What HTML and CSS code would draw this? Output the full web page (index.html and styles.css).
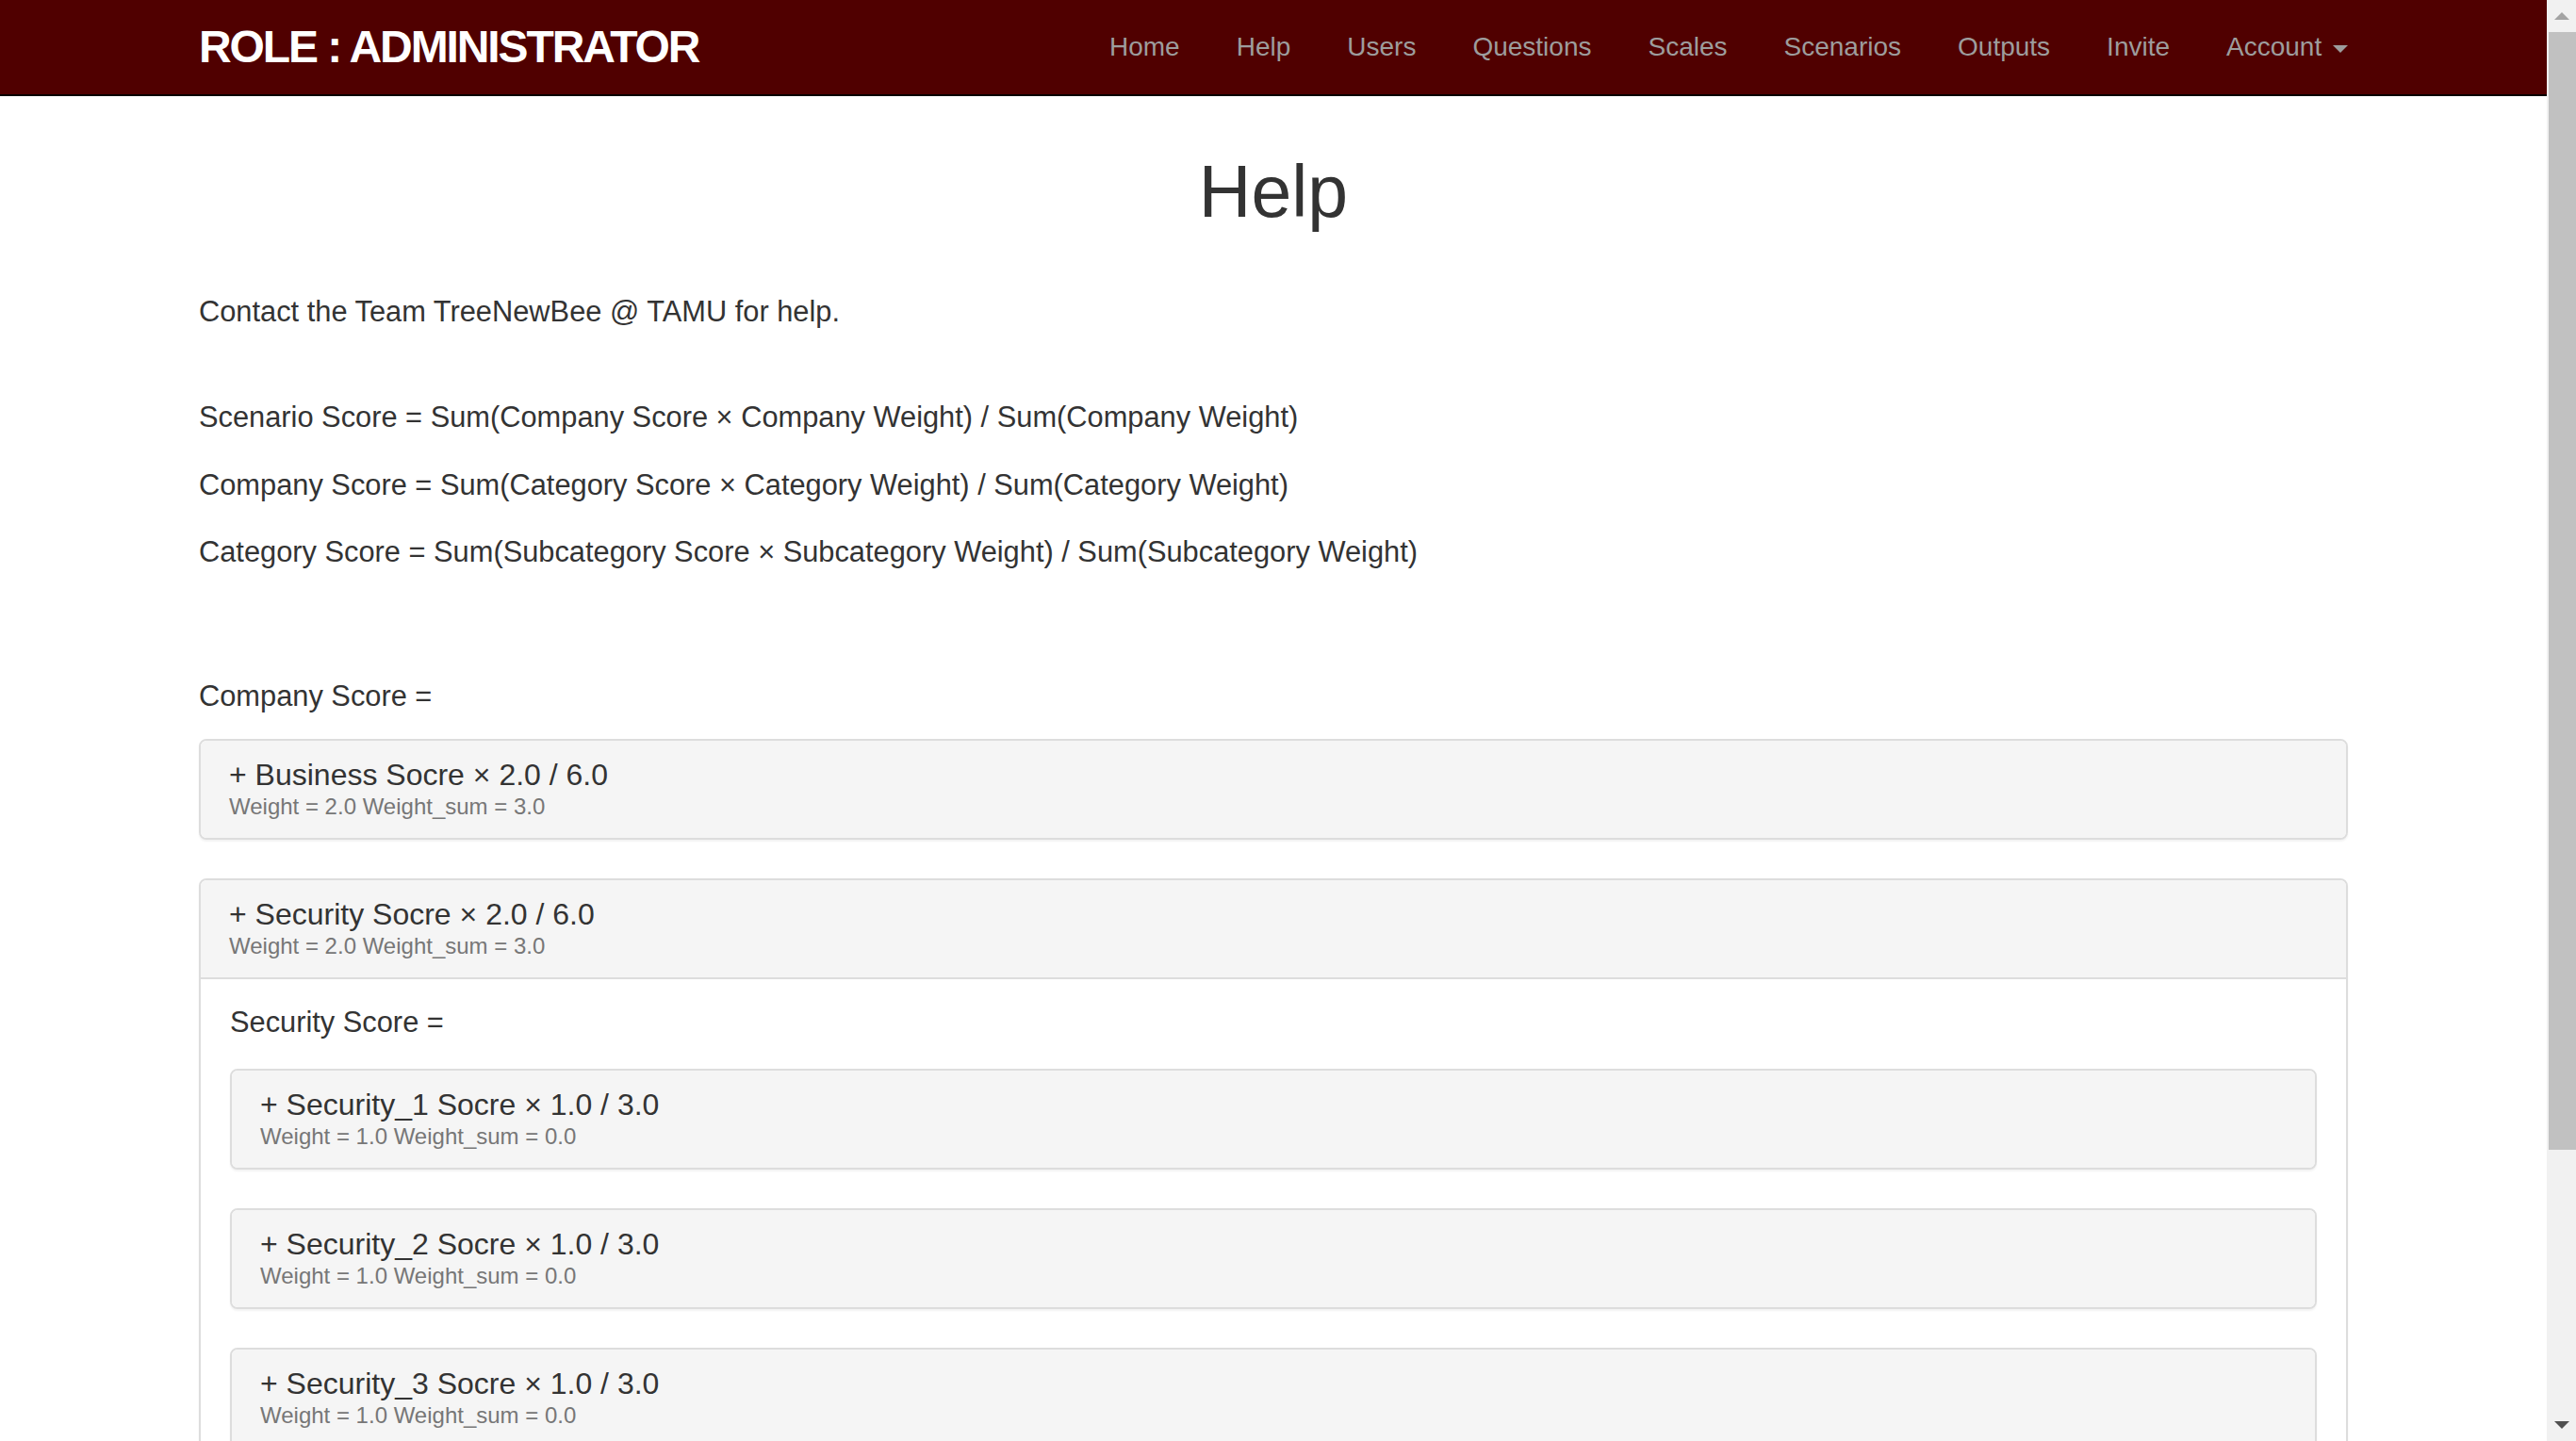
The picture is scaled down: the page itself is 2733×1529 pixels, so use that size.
FILE: index.html
```html
<!DOCTYPE html>
<html lang="en">
<head>
<meta charset="utf-8">
<title>Help</title>
<link rel="stylesheet" href="styles.css">
</head>
<body>
<div class="viewport">
  <div class="page">
    <nav class="navbar">
      <div class="container nav-inner">
        <a class="brand" href="#">ROLE : ADMINISTRATOR</a>
        <ul class="nav">
          <li><a href="#">Home</a></li>
          <li><a href="#">Help</a></li>
          <li><a href="#">Users</a></li>
          <li><a href="#">Questions</a></li>
          <li><a href="#">Scales</a></li>
          <li><a href="#">Scenarios</a></li>
          <li><a href="#">Outputs</a></li>
          <li><a href="#">Invite</a></li>
          <li><a href="#">Account <span class="caret"></span></a></li>
        </ul>
      </div>
    </nav>
    <main class="container content">
      <h1 class="title">Help</h1>
      <p class="contact">Contact the Team TreeNewBee @ TAMU for help.</p>
      <p class="formula">Scenario Score = Sum(Company Score × Company Weight) / Sum(Company Weight)</p>
      <p class="formula">Company Score = Sum(Category Score × Category Weight) / Sum(Category Weight)</p>
      <p class="formula">Category Score = Sum(Subcategory Score × Subcategory Weight) / Sum(Subcategory Weight)</p>
      <p class="label top-label">Company Score =</p>

      <div class="panel">
        <div class="panel-heading">
          <div class="panel-title">+ Business Socre × 2.0 / 6.0</div>
          <small class="sub">Weight = 2.0 Weight_sum = 3.0</small>
        </div>
      </div>

      <div class="panel">
        <div class="panel-heading with-body">
          <div class="panel-title">+ Security Socre × 2.0 / 6.0</div>
          <small class="sub">Weight = 2.0 Weight_sum = 3.0</small>
        </div>
        <div class="panel-body">
          <p class="label">Security Score =</p>
          <div class="panel">
            <div class="panel-heading">
              <div class="panel-title">+ Security_1 Socre × 1.0 / 3.0</div>
              <small class="sub">Weight = 1.0 Weight_sum = 0.0</small>
            </div>
          </div>
          <div class="panel">
            <div class="panel-heading">
              <div class="panel-title">+ Security_2 Socre × 1.0 / 3.0</div>
              <small class="sub">Weight = 1.0 Weight_sum = 0.0</small>
            </div>
          </div>
          <div class="panel">
            <div class="panel-heading">
              <div class="panel-title">+ Security_3 Socre × 1.0 / 3.0</div>
              <small class="sub">Weight = 1.0 Weight_sum = 0.0</small>
            </div>
          </div>
        </div>
      </div>
    </main>
  </div>
  <div class="scrollbar">
    <div class="sb-btn"><span class="arrow-up"></span></div>
    <div class="sb-track"><div class="sb-thumb"></div></div>
    <div class="sb-btn sb-btn-down"><span class="arrow-down"></span></div>
  </div>
</div>
</body>
</html>
```

FILE: styles.css
```css
html, body {
  margin: 0;
  padding: 0;
  height: 100%;
  overflow: hidden;
}

body {
  font-family: "Liberation Sans", Arial, Helvetica, sans-serif;
  color: #333333;
  background: #ffffff;
}

.viewport {
  display: flex;
  height: 100vh;
  overflow: hidden;
}

.page {
  flex: 1;
  min-width: 0;
  overflow: hidden;
}

.container {
  width: 2340px;
  box-sizing: border-box;
  padding: 0 30px;
  margin: 0 auto;
}

/* Navbar */
.navbar {
  height: 100px;
  background: #500000;
  border-bottom: 2px solid #0a0000;
}

.nav-inner {
  display: flex;
  align-items: stretch;
  height: 100px;
}

.brand {
  color: #ffffff;
  text-decoration: none;
  font-size: 48px;
  font-weight: bold;
  letter-spacing: -2.1px;
  line-height: 100px;
  white-space: nowrap;
}

.nav {
  display: flex;
  list-style: none;
  margin: 0 -30px 0 auto;
  padding: 0;
}

.nav a {
  display: block;
  padding: 0 30px;
  line-height: 100px;
  font-size: 28px;
  color: #9d9d9d;
  text-decoration: none;
  white-space: nowrap;
}

.caret {
  display: inline-block;
  width: 0;
  height: 0;
  margin-left: 4px;
  vertical-align: middle;
  border-top: 8px solid #9d9d9d;
  border-left: 8px solid transparent;
  border-right: 8px solid transparent;
}

/* Content */
.content {
  font-size: 30.8px;
}

.title {
  margin: 57px 0 0;
  font-size: 77px;
  line-height: 88px;
  font-weight: normal;
  text-align: center;
  color: #333333;
}

.content p {
  margin: 0;
  line-height: 44px;
}

.contact {
  margin-top: 62px !important;
  margin-bottom: 68px !important;
}

.formula {
  margin-bottom: 27.5px !important;
}

.top-label {
  margin-top: 109px !important;
  margin-bottom: 23px !important;
}

/* Panels */
.panel {
  border: 2px solid #dddddd;
  border-radius: 8px;
  box-shadow: 0 2px 2px rgba(0, 0, 0, 0.05);
  margin-bottom: 41px;
  background: #ffffff;
}

.panel-heading {
  background: #f5f5f5;
  padding: 17px 30px 18px;
  border-radius: 6px;
}

.panel-heading.with-body {
  border-bottom: 2px solid #dddddd;
  border-radius: 6px 6px 0 0;
}

.panel-title {
  font-size: 32px;
  line-height: 38px;
  color: #333333;
}

.sub {
  display: block;
  font-size: 24px;
  line-height: 30px;
  color: #777777;
}

.panel-body {
  padding: 24px 31px 31px;
}

.panel-body .label {
  margin-bottom: 27px;
}

/* Fake scrollbar */
.scrollbar {
  width: 31px;
  flex: none;
  background: #f1f1f1;
  display: flex;
  flex-direction: column;
}

.sb-btn {
  height: 34px;
  flex: none;
  display: flex;
  align-items: center;
  justify-content: center;
}

.sb-track {
  flex: 1;
}

.sb-thumb {
  margin-left: 2px;
  height: 1186px;
  background: #c1c1c1;
}

.arrow-up {
  width: 0;
  height: 0;
  border-left: 8px solid transparent;
  border-right: 8px solid transparent;
  border-bottom: 8px solid #a3a3a3;
}

.arrow-down {
  width: 0;
  height: 0;
  border-left: 8px solid transparent;
  border-right: 8px solid transparent;
  border-top: 8px solid #505050;
}
```
